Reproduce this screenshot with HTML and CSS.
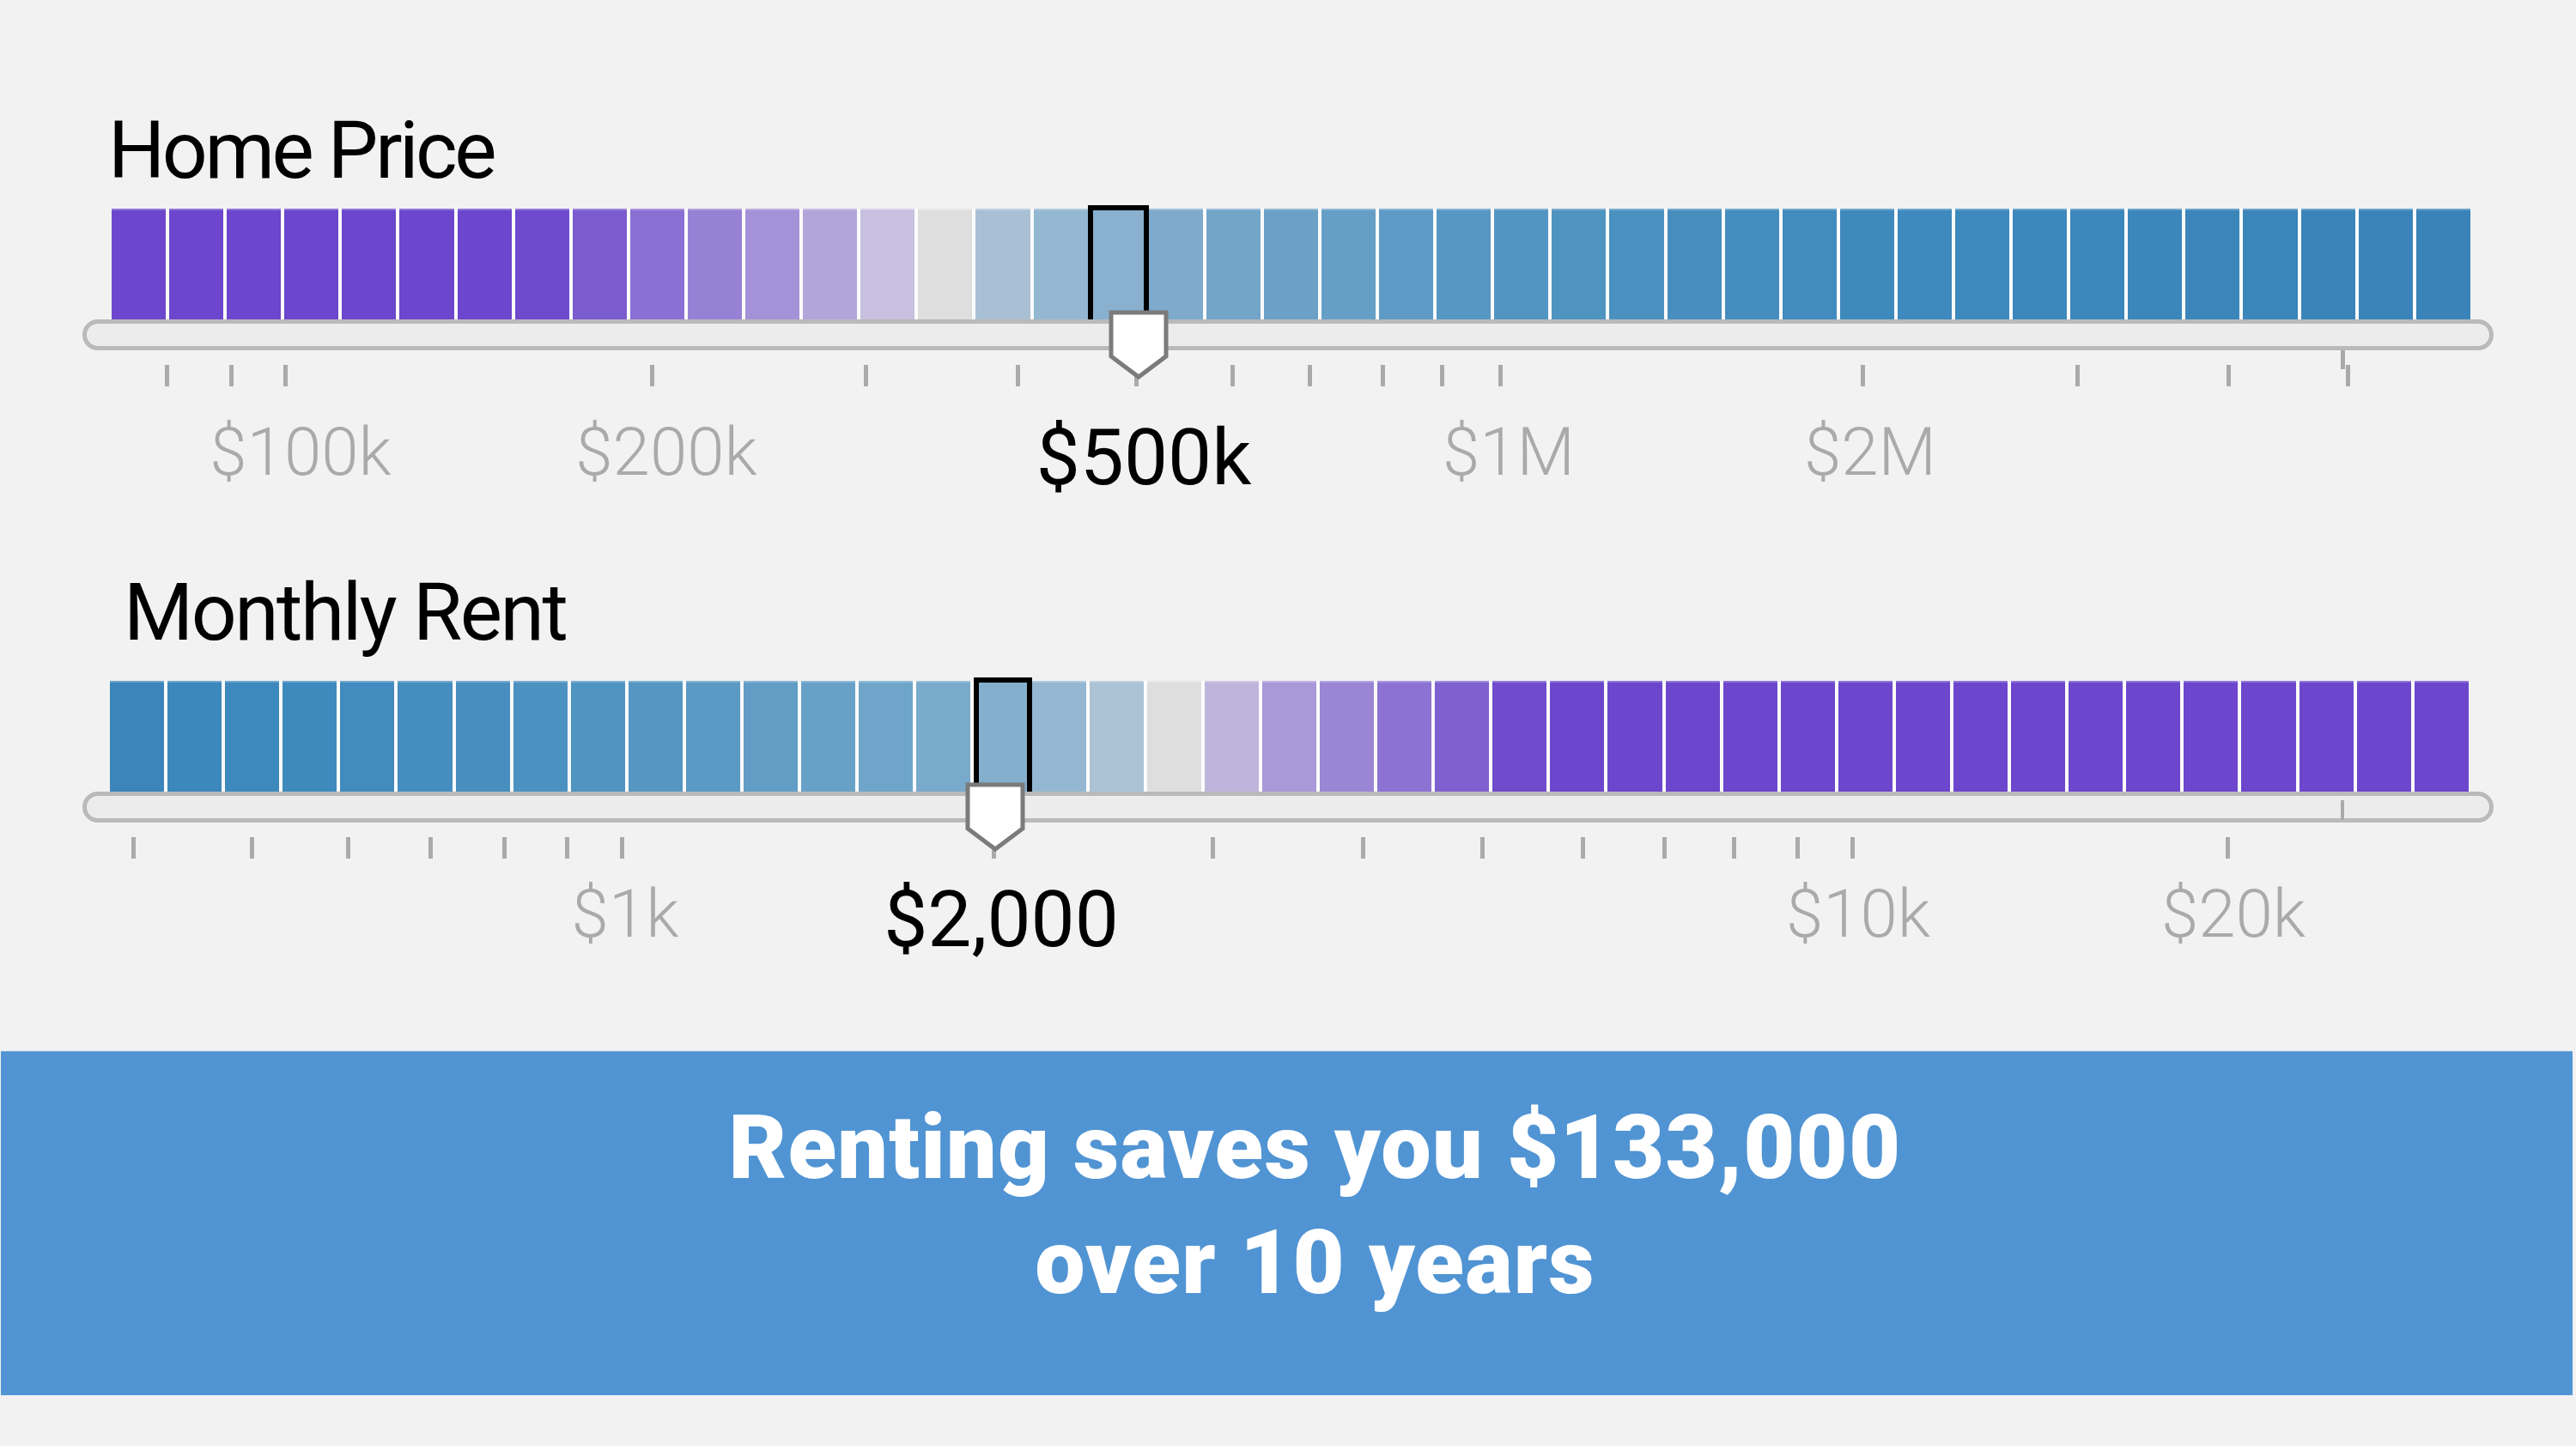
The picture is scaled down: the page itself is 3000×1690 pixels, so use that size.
FILE: index.html
```html
<!DOCTYPE html>
<html>
  <head>
    <title>Rent or Buy</title>
    <link rel="stylesheet" href="styles.css">
  </head>
  <body>
    <main class="calc">
      <section class="slider slider--price">
        <h2 class="slider-title">Home Price</h2>
        <div class="slider-body">
          <div class="cells">
            <span class="cell" style="background:#6c46cc"></span>
            <span class="cell" style="background:#6c46cc"></span>
            <span class="cell" style="background:#6c46cc"></span>
            <span class="cell" style="background:#6c46cc"></span>
            <span class="cell" style="background:#6c46cc"></span>
            <span class="cell" style="background:#6c46cc"></span>
            <span class="cell" style="background:#6c46cc"></span>
            <span class="cell" style="background:#6e4acd"></span>
            <span class="cell" style="background:#7b5ccf"></span>
            <span class="cell" style="background:#8a70d3"></span>
            <span class="cell" style="background:#9781d5"></span>
            <span class="cell" style="background:#a491d8"></span>
            <span class="cell" style="background:#b2a5da"></span>
            <span class="cell" style="background:#c7c0de"></span>
            <span class="cell" style="background:#dedede"></span>
            <span class="cell" style="background:#a9c0d4"></span>
            <span class="cell" style="background:#94b8d1"></span>
            <span class="cell selected" style="background:#89b0ce"></span>
            <span class="cell" style="background:#7eabcb"></span>
            <span class="cell" style="background:#73a5c9"></span>
            <span class="cell" style="background:#6ba1c7"></span>
            <span class="cell" style="background:#659fc6"></span>
            <span class="cell" style="background:#5d9ac5"></span>
            <span class="cell" style="background:#5797c3"></span>
            <span class="cell" style="background:#5395c2"></span>
            <span class="cell" style="background:#4f93c1"></span>
            <span class="cell" style="background:#4b91c0"></span>
            <span class="cell" style="background:#478ebf"></span>
            <span class="cell" style="background:#448dbe"></span>
            <span class="cell" style="background:#418bbe"></span>
            <span class="cell" style="background:#3f8abd"></span>
            <span class="cell" style="background:#3e89bd"></span>
            <span class="cell" style="background:#3d88bc"></span>
            <span class="cell" style="background:#3c88bc"></span>
            <span class="cell" style="background:#3c87bb"></span>
            <span class="cell" style="background:#3b86bb"></span>
            <span class="cell" style="background:#3b85ba"></span>
            <span class="cell" style="background:#3a85ba"></span>
            <span class="cell" style="background:#3a84b9"></span>
            <span class="cell" style="background:#3a84b9"></span>
            <span class="cell" style="background:#3983b8"></span>
          </div>
          <div class="track"></div>
          <svg class="thumb" style="left:1195px" viewBox="0 0 70 82" width="70" height="82">
            <polygon points="3,3 67,3 67,54 35,78 3,54" />
          </svg>
          <div class="scale">
            <span class="tick" style="left:96px"></span>
            <span class="tick" style="left:171px"></span>
            <span class="tick" style="left:234px"></span>
            <span class="tick" style="left:661px"></span>
            <span class="tick" style="left:910px"></span>
            <span class="tick" style="left:1087px"></span>
            <span class="tick" style="left:1225px"></span>
            <span class="tick" style="left:1337px"></span>
            <span class="tick" style="left:1427px"></span>
            <span class="tick" style="left:1512px"></span>
            <span class="tick" style="left:1581px"></span>
            <span class="tick" style="left:1649px"></span>
            <span class="tick" style="left:2071px"></span>
            <span class="tick" style="left:2321px"></span>
            <span class="tick" style="left:2497px"></span>
            <span class="tick tick--stub" style="left:2630px"></span>
            <span class="tick" style="left:2636px"></span>

            <span class="tick-label" style="left:254px">$100k</span>
            <span class="tick-label" style="left:680px">$200k</span>
            <span class="tick-label current" style="left:1236px">$500k</span>
            <span class="tick-label" style="left:1661px">$1M</span>
            <span class="tick-label" style="left:2082px">$2M</span>
          </div>
        </div>
      </section>

      <section class="slider slider--rent">
        <h2 class="slider-title">Monthly Rent</h2>
        <div class="slider-body">
          <div class="cells">
            <span class="cell" style="background:#3b85ba"></span>
            <span class="cell" style="background:#3c87bb"></span>
            <span class="cell" style="background:#3d88bc"></span>
            <span class="cell" style="background:#3f8abd"></span>
            <span class="cell" style="background:#418bbe"></span>
            <span class="cell" style="background:#448dbe"></span>
            <span class="cell" style="background:#488fbf"></span>
            <span class="cell" style="background:#4c92c0"></span>
            <span class="cell" style="background:#5094c1"></span>
            <span class="cell" style="background:#5597c2"></span>
            <span class="cell" style="background:#5b9ac4"></span>
            <span class="cell" style="background:#619dc5"></span>
            <span class="cell" style="background:#68a1c7"></span>
            <span class="cell" style="background:#6fa5c9"></span>
            <span class="cell" style="background:#79aacb"></span>
            <span class="cell selected" style="background:#84afcd"></span>
            <span class="cell" style="background:#94b8d1"></span>
            <span class="cell" style="background:#abc3d5"></span>
            <span class="cell" style="background:#dedede"></span>
            <span class="cell" style="background:#beb5dc"></span>
            <span class="cell" style="background:#a999d8"></span>
            <span class="cell" style="background:#9a86d5"></span>
            <span class="cell" style="background:#8c73d3"></span>
            <span class="cell" style="background:#7e60d0"></span>
            <span class="cell" style="background:#704ccd"></span>
            <span class="cell" style="background:#6c46cc"></span>
            <span class="cell" style="background:#6c46cc"></span>
            <span class="cell" style="background:#6c46cc"></span>
            <span class="cell" style="background:#6c46cc"></span>
            <span class="cell" style="background:#6c46cc"></span>
            <span class="cell" style="background:#6c46cc"></span>
            <span class="cell" style="background:#6c46cc"></span>
            <span class="cell" style="background:#6c46cc"></span>
            <span class="cell" style="background:#6c46cc"></span>
            <span class="cell" style="background:#6c46cc"></span>
            <span class="cell" style="background:#6c46cc"></span>
            <span class="cell" style="background:#6c46cc"></span>
            <span class="cell" style="background:#6c46cc"></span>
            <span class="cell" style="background:#6c46cc"></span>
            <span class="cell" style="background:#6c46cc"></span>
            <span class="cell" style="background:#6c46cc"></span>
          </div>
          <div class="track"></div>
          <svg class="thumb" style="left:1028px" viewBox="0 0 70 82" width="70" height="82">
            <polygon points="3,3 67,3 67,54 35,78 3,54" />
          </svg>
          <div class="scale">
            <span class="tick" style="left:57px"></span>
            <span class="tick" style="left:195px"></span>
            <span class="tick" style="left:307px"></span>
            <span class="tick" style="left:403px"></span>
            <span class="tick" style="left:489px"></span>
            <span class="tick" style="left:562px"></span>
            <span class="tick" style="left:626px"></span>
            <span class="tick" style="left:1059px"></span>
            <span class="tick" style="left:1314px"></span>
            <span class="tick" style="left:1489px"></span>
            <span class="tick" style="left:1628px"></span>
            <span class="tick" style="left:1745px"></span>
            <span class="tick" style="left:1840px"></span>
            <span class="tick" style="left:1921px"></span>
            <span class="tick" style="left:1995px"></span>
            <span class="tick" style="left:2059px"></span>
            <span class="tick" style="left:2496px"></span>
            <span class="tick tick--inset" style="left:2630px"></span>

            <span class="tick-label" style="left:632px">$1k</span>
            <span class="tick-label current" style="left:1070px">$2,000</span>
            <span class="tick-label" style="left:2068px">$10k</span>
            <span class="tick-label" style="left:2505px">$20k</span>
          </div>
        </div>
      </section>

      <div class="result">Renting saves you $133,000<br>over 10 years</div>
    </main>
  </body>
</html>
```

FILE: styles.css
```css
:root {
  --page-bg: #f2f2f2;
  --label-grey: #aaaaaa;
  --track-border: #bababa;
  --track-fill: #ececec;
  --thumb-border: #7b7b7b;
  --result-bg: #5194d3;
}

body {
  margin: 0;
  background-color: #ffffff;
  font-family: Roboto, "Liberation Sans", sans-serif;
}

.calc {
  height: 1684px;
  padding-top: 129px;
  box-sizing: border-box;
  background-color: var(--page-bg);
  overflow: hidden;
}

/* slider: title, coloured steps, track with thumb, scale */

.slider-title {
  margin: 0 0 21px 126px;
  font-size: 93px;
  line-height: 93px;
  font-weight: 400;
  letter-spacing: -3.5px;
  color: #000;
}

.slider--rent .slider-title {
  margin: 0 0 33px 144px;
  letter-spacing: -2.5px;
}

.slider-body {
  position: relative;
  margin: 0 96px;
}

.cells {
  display: flex;
  gap: 4px;
  height: 129px;
  margin: 0 27px 0 34px;
  background-color: #fbfbfb;
}

.slider--rent .cells {
  margin: 0 29px 0 32px;
}

.cell {
  position: relative;
  flex: 1;
  box-shadow: inset 0 2px 0 rgba(255, 255, 255, 0.25);
}

.cell.selected::after {
  content: "";
  position: absolute;
  top: -4px;
  left: -4px;
  right: -4px;
  bottom: 0;
  border: 6px solid #000;
  border-bottom: none;
  z-index: 1;
}

.slider--rent .cell.selected::after {
  left: 0;
}

.track {
  height: 36px;
  box-sizing: border-box;
  border: 5px solid var(--track-border);
  border-radius: 18px;
  background-color: var(--track-fill);
}

.thumb {
  position: absolute;
  top: 118px;
  z-index: 3;
  display: block;
}

.thumb polygon {
  fill: #fff;
  stroke: var(--thumb-border);
  stroke-width: 5;
  stroke-linejoin: miter;
}

.scale {
  position: relative;
  height: 259px;
}

.slider--rent .scale {
  height: 266px;
}

.tick {
  position: absolute;
  top: 17px;
  width: 5px;
  height: 25px;
  background-color: var(--label-grey);
}

.tick--stub {
  top: 0;
  height: 22px;
}

.tick--inset {
  top: -26px;
  width: 4px;
  height: 23px;
}

.tick-label {
  position: absolute;
  top: 80px;
  transform: translateX(-50%);
  white-space: nowrap;
  font-size: 78px;
  line-height: 78px;
  font-weight: 300;
  color: var(--label-grey);
}

.tick-label.current {
  font-size: 91px;
  line-height: 91px;
  font-weight: 400;
  color: #000;
}

.slider--rent .tick-label {
  top: 68px;
}

/* result banner */

.result {
  height: 401px;
  box-sizing: border-box;
  margin: 0 4px 0 1px;
  padding: 45px 0 0 66px;
  border-top: 1px solid #8ab5df;
  background-color: var(--result-bg);
  color: #fff;
  text-align: center;
  font-size: 104px;
  line-height: 134px;
  font-weight: 900;
  letter-spacing: 1.2px;
}
```
